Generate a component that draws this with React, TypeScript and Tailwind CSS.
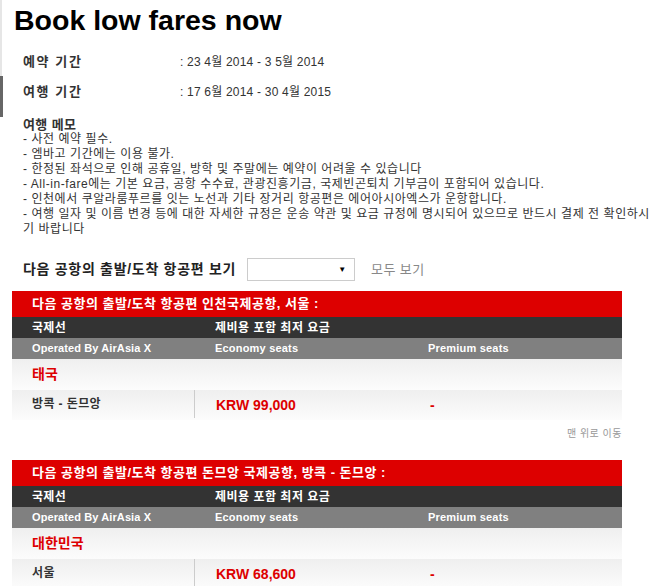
import React from "react";

const FONT = "font-['Liberation_Sans','Noto_Sans_CJK_KR',sans-serif]";

type Sec = { title: string; country: string; city: string; price: string };

function FareTable({ s }: { s: Sec }) {
  return (
    <div className="w-[610px]">
      <div className="h-[26px] bg-[#dd0000] flex items-center pl-[20px] text-[13px] font-bold text-white tracking-[0.5px]">
        {s.title}
      </div>
      <div className="h-[21px] bg-[#333333] grid grid-cols-[183px_427px] items-center text-[12px] font-bold text-white">
        <div className="pl-[20px] tracking-[0.3px]">국제선</div>
        <div className="pl-[20px] tracking-[0.5px]">제비용 포함 최저 요금</div>
      </div>
      <div className="h-[21px] bg-[#808080] grid grid-cols-[183px_213px_214px] items-center text-[11px] font-bold text-white">
        <div className="pl-[20px] tracking-[0.1px]">Operated By AirAsia X</div>
        <div className="pl-[20px] tracking-[0.2px]">Economy seats</div>
        <div className="pl-[20px] tracking-[0.2px]">Premium seats</div>
      </div>
      <div className="h-[31px] bg-linear-to-b from-[#efefef] to-[#fcfcfc] flex items-center pl-[20px] text-[14px] font-bold text-[#dd0000]">
        {s.country}
      </div>
      <div className="h-[30px] bg-linear-to-b from-[#efefef] to-[#fcfcfc] grid grid-cols-[183px_213px_214px] items-stretch">
        <div className="flex items-center pl-[20px] text-[12px] font-bold text-[#333] tracking-[0.4px] border-r border-[#cccccc] mb-[2px]">
          {s.city}
        </div>
        <div className="flex items-center pl-[21px] text-[14px] font-bold text-[#dd0000]">{s.price}</div>
        <div className="flex items-center pl-[22px] text-[14px] font-bold text-[#dd0000]">-</div>
      </div>
    </div>
  );
}

export default function App() {
  const memo = [
    "- 사전 예약 필수.",
    "- 엠바고 기간에는 이용 불가.",
    "- 한정된 좌석으로 인해 공휴일, 방학 및 주말에는 예약이 어려울 수 있습니다",
    "- All-in-fare에는 기본 요금, 공항 수수료, 관광진흥기금, 국제빈곤퇴치 기부금이 포함되어 있습니다.",
    "- 인천에서 쿠알라룸푸르를 잇는 노선과 기타 장거리 항공편은 에어아시아엑스가 운항합니다.",
  ];
  return (
    <div className={`flex w-[661px] h-[586px] overflow-hidden bg-white ${FONT}`}>
      <div className="flex flex-col w-[3px] shrink-0">
        <div className="h-[76px] w-[2px] bg-[#e6e6e6]" />
        <div className="h-[41px] w-[3px] bg-[#666666]" />
      </div>
      <div className="flex-1 pl-[9px]">
        <h1 className="pt-[4px] pl-[2px] text-[28.5px] leading-[32px] font-bold text-black">
          Book low fares now
        </h1>
        <div className="mt-[11px] pl-[11px] text-[#333]">
          <div className="h-[30px] flex items-center">
            <div className="w-[157px] text-[13px] font-bold tracking-[1.6px]">예약 기간</div>
            <div className="text-[12px] tracking-[0.2px]">: 23 4월 2014 - 3 5월 2014</div>
          </div>
          <div className="h-[30px] flex items-center">
            <div className="w-[157px] text-[13px] font-bold tracking-[1.6px]">여행 기간</div>
            <div className="text-[12px] tracking-[0.2px]">: 17 6월 2014 - 30 4월 2015</div>
          </div>
          <div className="mt-[10px] text-[12px] leading-[15px] tracking-[0.55px]">
            <div className="font-bold text-[13px] tracking-[0.4px]">여행 메모</div>
            {memo.map((m) => (
              <div key={m}>{m}</div>
            ))}
            <div>
              - 여행 일자 및 이름 변경 등에 대한 자세한 규정은 운송 약관 및 요금 규정에 명시되어 있으므로 반드시 결제 전 확인하시
              <br />기 바랍니다
            </div>
          </div>
          <div className="mt-[21px] h-[23px] flex items-center">
            <div className="text-[14px] font-bold text-[#222] tracking-[0.7px]">다음 공항의 출발/도착 항공편 보기</div>
            <div className="ml-[11px] w-[108px] h-[23px] border border-[#cccccc] bg-white flex items-center justify-end pr-[8px]">
              <span className="text-[8px] text-black">▼</span>
            </div>
            <div className="ml-[16px] text-[13px] text-[#888] tracking-[0.4px]">모두 보기</div>
          </div>
        </div>
        <div className="mt-[10px]">
          <FareTable
            s={{
              title: "다음 공항의 출발/도착 항공편 인천국제공항, 서울 :",
              country: "태국",
              city: "방콕 - 돈므앙",
              price: "KRW 99,000",
            }}
          />
          <div className="w-[610px] h-[40px] pt-[7px] text-right text-[10px] leading-[14px] text-[#999] tracking-[0.5px]">
            맨 위로 이동
          </div>
          <FareTable
            s={{
              title: "다음 공항의 출발/도착 항공편 돈므앙 국제공항, 방콕 - 돈므앙 :",
              country: "대한민국",
              city: "서울",
              price: "KRW 68,600",
            }}
          />
        </div>
      </div>
    </div>
  );
}
